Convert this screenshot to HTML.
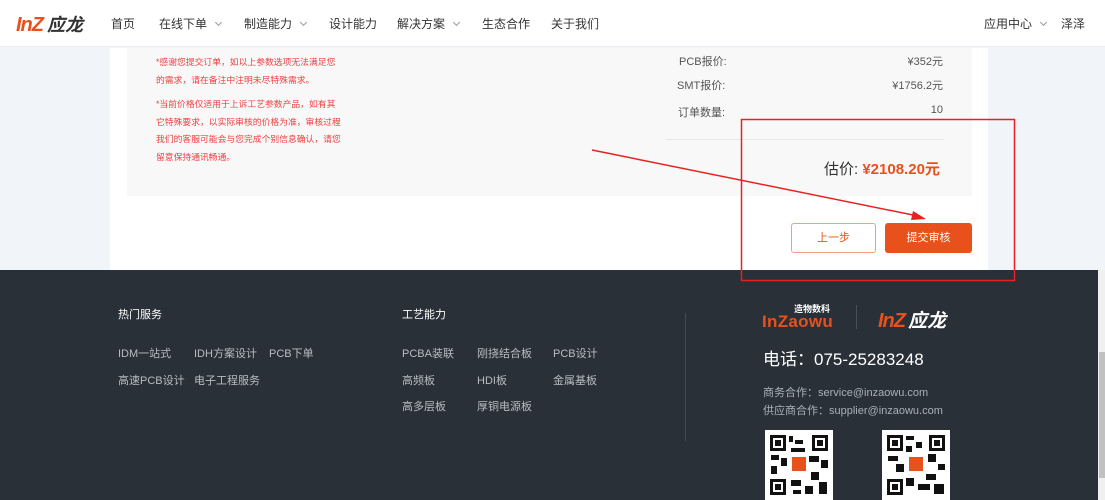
<!DOCTYPE html>
<html><head><meta charset="utf-8"><style>
*{margin:0;padding:0;box-sizing:border-box}
body{width:1105px;height:500px;overflow:hidden;position:relative;background:#f1f4f8;font-family:"Liberation Sans","Noto Sans CJK SC",sans-serif}
.a{position:absolute;white-space:nowrap}
.hdr{position:absolute;left:0;top:0;width:1105px;height:47px;background:#fff;border-bottom:1px solid #eceef1}
.nav{font-size:12px;color:#333;top:15px}
.chev{display:inline-block;width:5px;height:5px;border-right:1px solid #999;border-bottom:1px solid #999;transform:rotate(45deg);margin-left:9px;position:relative;top:-3px}
.card{position:absolute;left:110px;top:48px;width:878px;height:222px;background:#fff}
.inner{position:absolute;left:127px;top:48px;width:845px;height:148px;background:#f8f8f9}
.red{font-size:8.8px;color:#f04040;line-height:17.5px;left:156px}
.lbl{font-size:11px;color:#555}
.ft{position:absolute;left:0;top:270px;width:1098px;height:230px;background:#2a3038}
.fh{font-size:11px;color:#fff}
.fl{font-size:11px;color:#b8bcc2}
</style></head><body>
<div class="hdr"></div>
<div class="a" style="left:16px;top:11px;display:flex;align-items:baseline"><span style="font-size:20px;font-weight:bold;font-style:italic;color:#e8511c;letter-spacing:-1px">InZ</span><span style="font-size:18px;font-weight:bold;color:#333;font-style:italic;margin-left:4px">应龙</span></div>
<div class="a nav" style="left:111px">首页</div>
<div class="a nav" style="left:159px">在线下单<span class="chev"></span></div>
<div class="a nav" style="left:244px">制造能力<span class="chev"></span></div>
<div class="a nav" style="left:329px">设计能力</div>
<div class="a nav" style="left:397px">解决方案<span class="chev"></span></div>
<div class="a nav" style="left:482px">生态合作</div>
<div class="a nav" style="left:551px">关于我们</div>
<div class="a nav" style="left:984px">应用中心<span class="chev"></span></div>
<div class="a nav" style="left:1061px">泽泽</div>

<div class="card"></div>
<div class="inner"></div>
<div class="a red" style="top:54px">*感谢您提交订单，如以上参数选项无法满足您<br>的需求，请在备注中注明未尽特殊需求。</div>
<div class="a red" style="top:96px">*当前价格仅适用于上诉工艺参数产品，如有其<br>它特殊要求，以实际审核的价格为准，审核过程<br>我们的客服可能会与您完成个别信息确认，请您<br>留意保持通讯畅通。</div>
<div class="a lbl" style="left:679px;top:53px">PCB报价:</div>
<div class="a lbl" style="left:677px;top:77px">SMT报价:</div>
<div class="a lbl" style="left:678px;top:104px">订单数量:</div>
<div class="a lbl" style="right:162px;top:53px">¥352元</div>
<div class="a lbl" style="right:162px;top:77px">¥1756.2元</div>
<div class="a lbl" style="right:162px;top:104px">10</div>
<div class="a" style="left:666px;top:139px;width:278px;height:1px;background:#e8e8e8"></div>
<div class="a" style="left:824px;top:158px;font-size:15px;color:#333">估价: <b style="color:#e8511c">¥2108.20元</b></div>
<div class="a" style="left:791px;top:223px;width:85px;height:30px;border:1px solid #f0a080;border-radius:3px;color:#e8511c;font-size:11px;text-align:center;line-height:28px">上一步</div>
<div class="a" style="left:885px;top:223px;width:87px;height:30px;background:#e8511c;border-radius:3px;color:#fff;font-size:11px;text-align:center;line-height:30px">提交审核</div>

<div class="ft"></div>
<div class="a" style="left:1098px;top:270px;width:7px;height:230px;background:#f0f0f0"></div>
<div class="a" style="left:1099px;top:352px;width:6px;height:126px;background:#c1c1c1"></div>
<div class="a fh" style="left:118px;top:306px">热门服务</div>
<div class="a fh" style="left:402px;top:306px">工艺能力</div>
<div class="a fl" style="left:118px;top:345px">IDM一站式</div>
<div class="a fl" style="left:194px;top:345px">IDH方案设计</div>
<div class="a fl" style="left:269px;top:345px">PCB下单</div>
<div class="a fl" style="left:118px;top:372px">高速PCB设计</div>
<div class="a fl" style="left:194px;top:372px">电子工程服务</div>
<div class="a fl" style="left:402px;top:345px">PCBA装联</div>
<div class="a fl" style="left:477px;top:345px">刚挠结合板</div>
<div class="a fl" style="left:553px;top:345px">PCB设计</div>
<div class="a fl" style="left:402px;top:372px">高频板</div>
<div class="a fl" style="left:477px;top:372px">HDI板</div>
<div class="a fl" style="left:553px;top:372px">金属基板</div>
<div class="a fl" style="left:402px;top:398px">高多层板</div>
<div class="a fl" style="left:477px;top:398px">厚铜电源板</div>
<div class="a" style="left:685px;top:313px;width:1px;height:128px;background:#454b53"></div>
<div class="a" style="left:794px;top:302px;font-size:9px;font-weight:bold;color:#fff">造物数科</div>
<div class="a" style="left:762px;top:312px;font-size:17px;font-weight:bold;color:#e8511c;letter-spacing:0.3px">InZaowu</div>
<div class="a" style="left:856px;top:305px;width:1px;height:24px;background:#4a5058"></div>
<div class="a" style="left:878px;top:306px;display:flex;align-items:baseline"><span style="font-size:20px;font-style:italic;color:#e8511c;font-weight:bold;letter-spacing:-1px">InZ</span><span style="font-size:19px;font-style:italic;color:#fff;font-weight:bold;margin-left:3px">应龙</span></div>
<div class="a" style="left:763px;top:345px;font-size:17px;color:#fff">电话：075-25283248</div>
<div class="a" style="left:763px;top:384px;font-size:11px;color:#aab0b8">商务合作：service@inzaowu.com</div>
<div class="a" style="left:763px;top:402px;font-size:11px;color:#aab0b8">供应商合作：supplier@inzaowu.com</div>
<svg class="a" style="left:765px;top:430px" width="68" height="70" viewBox="0 0 68 70"><rect width="68" height="70" fill="#fff"/><g fill="#111"><rect x="5" y="5" width="16" height="16"/><rect x="47" y="5" width="16" height="16"/><rect x="5" y="49" width="16" height="16"/><rect x="24" y="6" width="4" height="6"/><rect x="30" y="10" width="8" height="4"/><rect x="26" y="18" width="14" height="4"/><rect x="6" y="25" width="8" height="5"/><rect x="16" y="28" width="6" height="8"/><rect x="44" y="26" width="10" height="6"/><rect x="56" y="30" width="7" height="8"/><rect x="6" y="36" width="6" height="8"/><rect x="46" y="42" width="8" height="8"/><rect x="26" y="50" width="10" height="6"/><rect x="40" y="56" width="8" height="8"/><rect x="54" y="52" width="8" height="12"/><rect x="28" y="60" width="8" height="4"/></g><g fill="#fff"><rect x="8" y="8" width="10" height="10"/><rect x="50" y="8" width="10" height="10"/><rect x="8" y="52" width="10" height="10"/></g><g fill="#111"><rect x="10" y="10" width="6" height="6"/><rect x="52" y="10" width="6" height="6"/><rect x="10" y="54" width="6" height="6"/></g><rect x="27" y="27" width="14" height="14" fill="#e8511c"/></svg>
<svg class="a" style="left:882px;top:430px" width="68" height="70" viewBox="0 0 68 70"><rect width="68" height="70" fill="#fff"/><g fill="#111"><rect x="5" y="5" width="16" height="16"/><rect x="47" y="5" width="16" height="16"/><rect x="5" y="49" width="16" height="16"/><rect x="24" y="6" width="8" height="4"/><rect x="34" y="12" width="6" height="6"/><rect x="24" y="16" width="6" height="6"/><rect x="6" y="26" width="10" height="5"/><rect x="14" y="34" width="8" height="8"/><rect x="46" y="24" width="8" height="8"/><rect x="56" y="34" width="7" height="6"/><rect x="44" y="44" width="10" height="6"/><rect x="24" y="48" width="8" height="8"/><rect x="36" y="54" width="12" height="6"/><rect x="52" y="54" width="10" height="10"/></g><g fill="#fff"><rect x="8" y="8" width="10" height="10"/><rect x="50" y="8" width="10" height="10"/><rect x="8" y="52" width="10" height="10"/></g><g fill="#111"><rect x="10" y="10" width="6" height="6"/><rect x="52" y="10" width="6" height="6"/><rect x="10" y="54" width="6" height="6"/></g><rect x="27" y="27" width="14" height="14" fill="#e8511c"/></svg>

<svg class="a" style="left:0;top:0" width="1105" height="500"><rect x="741.5" y="119.5" width="273" height="161" fill="none" stroke="#e82020" stroke-width="1.5"/><line x1="592" y1="150" x2="918" y2="216" stroke="#e82020" stroke-width="1.5"/><polygon points="926,219 913,211 911,220" fill="#e82020"/></svg>
</body></html>
